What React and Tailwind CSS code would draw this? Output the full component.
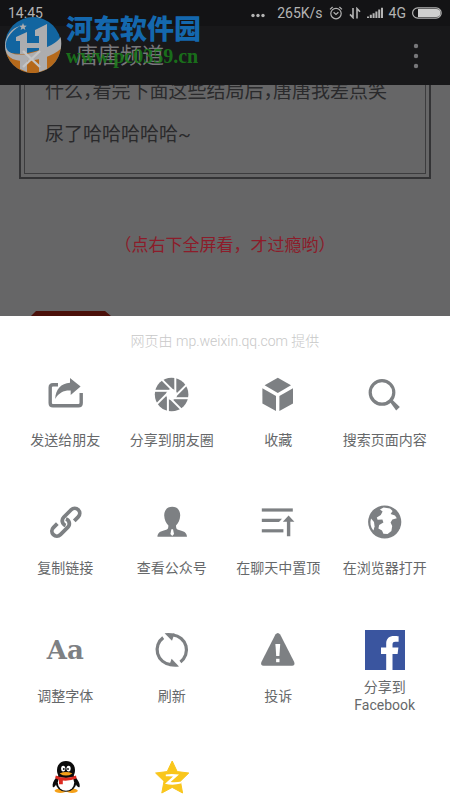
const GRAY = "#7d8083";

function Icon({ children }) {
  return (
    <svg viewBox="0 0 40 40" className="block h-10 w-10" aria-hidden="true">
      {children}
    </svg>
  );
}

const ShareIcon = () => (
  <Icon>
    <path
      d="M13 10.8H8Q5.2 10.8 5.2 13.6V29Q5.2 31.8 8 31.8H33.4Q36.2 31.8 36.2 29V19"
      fill="none"
      stroke={GRAY}
      strokeWidth="3.4"
    />
    <path d="M25 4L35.6 12.6L25.7 21V16.6C19 16.2 14 18.6 10.2 25C10.6 15.4 16 9.4 25 8.8Z" fill={GRAY} />
  </Icon>
);

const MomentsIcon = () => (
  <Icon>
    <circle cx="19.6" cy="20.5" r="16.8" fill={GRAY} />
    <circle cx="19.6" cy="20.5" r="5.4" fill="#fff" />
    {[0, 45, 90, 135, 180, 225, 270, 315].map((deg) => (
      <path
        key={deg}
        d="M17 24.2H38"
        stroke="#fff"
        strokeWidth="2"
        transform={`rotate(${deg} 19.6 20.5)`}
      />
    ))}
  </Icon>
);

const BoxIcon = () => (
  <Icon>
    <g fill={GRAY}>
      <path d="M19.8 3.8L33 11.2L19.8 19L6.6 11.2Z" />
      <path d="M4.4 14.2L18 22V37L4.4 29.4Z" />
      <path d="M21.4 22L35 14.2V29.4L21.4 37Z" />
    </g>
  </Icon>
);

const SearchIcon = () => (
  <Icon>
    <circle cx="17" cy="18.4" r="11.8" fill="none" stroke={GRAY} strokeWidth="3.2" />
    <path d="M24.6 27.4L26.8 25.2L34.8 33L31.2 36.6Z" fill={GRAY} />
  </Icon>
);

const LinkIcon = () => (
  <Icon>
    <g
      transform="translate(20.8 20.2) rotate(-45)"
      fill="none"
      stroke={GRAY}
      strokeWidth="3.8"
    >
      <path d="M7 5H12.6A5 5 0 0 0 12.6 -5H2A5 5 0 0 0 -2.4 2.2" />
      <path d="M-7 -5H-12.6A5 5 0 0 0 -12.6 5H-2A5 5 0 0 0 2.4 -2.2" />
    </g>
  </Icon>
);

const AccountIcon = () => (
  <Icon>
    <path
      d="M20.2 4.8C25.4 4.8 28.4 8.6 28.2 13.6C28 18 26.4 21.4 24 23.4C24 26.4 24.6 27.2 27 28C31.4 29.4 34.8 30 35 34.8H5.4C5.6 30 9 29.4 13.4 28C15.8 27.2 16.4 26.4 16.4 23.4C14 21.4 12.4 18 12.2 13.6C12 8.6 15 4.8 20.2 4.8Z"
      fill={GRAY}
    />
    <path d="M19.4 27.2H21L22 32L20.2 34L18.4 32Z" fill="#fff" />
  </Icon>
);

const PinTopIcon = () => (
  <Icon>
    <g fill={GRAY}>
      <path d="M3.8 6.4H34.8V9.6H3.8Z" />
      <path d="M3.8 16.8H24L21 20H3.8Z" />
      <path d="M3.8 27.2H25.4V30.4H3.8Z" />
      <path d="M30.6 13.4L36.4 19.8H32.3V34.2H28.9V19.8H24.8Z" />
    </g>
  </Icon>
);

const GlobeIcon = () => (
  <Icon>
    <circle cx="19.7" cy="20" r="16.6" fill={GRAY} />
    <path
      d="M15 7.4L18.6 5.4L25 6.6L27.6 9L25.6 12L30 13.4L31.8 16.2L27.4 17.4L25.6 20.4L27.2 24L26.4 29L22.6 32L18.4 31.8L17 28.4L13.4 26.6L14.2 23L18.4 20.4L17.4 17.6L12.6 17.8L11.8 15.6L15.8 13L17.6 9.6Z"
      fill="#fff"
    />
    <path d="M6 16.4L9 20L9.6 24.6L8.4 28.6C5.4 25 4.8 20.6 6 16.4Z" fill="#fff" />
  </Icon>
);

const FontIcon = () => (
  <span className="flex h-10 w-10 items-center justify-center font-['DejaVu_Serif',serif] text-[26px] leading-10 font-bold text-[#7d8083]">
    Aa
  </span>
);

const RefreshIcon = () => (
  <Icon>
    {[0, 180].map((deg) => (
      <g key={deg} transform={`rotate(${deg} 19.8 19.8)`}>
        <path d="M11.2 7.6A15 15 0 0 0 18.6 34.6" fill="none" stroke={GRAY} strokeWidth="3.2" />
        <path d="M19.6 28.8L27 36.4Q22 37 17 36Z" fill={GRAY} />
      </g>
    ))}
  </Icon>
);

const WarningIcon = () => (
  <Icon>
    <path
      d="M17.4 4.4Q19.8 1.4 22.2 4.4L36.2 32Q37.4 35.6 34 35.8H5.6Q2.2 35.6 3.4 32Z"
      fill={GRAY}
    />
    <path d="M17.4 14H22.2L21.4 26H18.2Z" fill="#fff" />
    <path d="M18.1 28.8H21.5V32.2H18.1Z" fill="#fff" />
  </Icon>
);

const FacebookIcon = () => (
  <Icon>
    <path d="M0 0H40V40H0Z" fill="#3a559f" />
    <path
      d="M21.2 40V24H16V17.6H21.2V13.6C21.2 8.4 24.4 6 29 6C31 6 32.4 6.1 33.6 6.3V11.8H30.4C28 11.8 27.5 13 27.5 14.6V17.6H33.4L32.6 24H27.5V40Z"
      fill="#fff"
    />
  </Icon>
);

const QQIcon = () => (
  <Icon>
    <path d="M11.6 19C8.4 22.4 7 26.4 7.8 29C8.8 30 10.4 28 11 26.6H31C31.6 28 33.6 30 34.6 29C35.4 26.4 33.4 22.4 30.4 19Z" fill="#0b0b0b" />
    <ellipse cx="15.4" cy="32.8" rx="5.8" ry="2.2" fill="#f5a11a" />
    <ellipse cx="27" cy="32.8" rx="5.8" ry="2.2" fill="#f5a11a" />
    <ellipse cx="21" cy="24" rx="10.4" ry="9.8" fill="#0b0b0b" />
    <ellipse cx="21" cy="24.6" rx="8.2" ry="8.2" fill="#fff" />
    <path d="M21 3C26.6 3 30 7 30 12C30 17 28 20 21 20C14 20 12 17 12 12C12 7 15.4 3 21 3Z" fill="#0b0b0b" />
    <ellipse cx="18.2" cy="10.6" rx="2.1" ry="2.9" fill="#fff" />
    <ellipse cx="23.6" cy="10.6" rx="2.1" ry="2.9" fill="#fff" />
    <circle cx="18.8" cy="11" r="0.9" fill="#0b0b0b" />
    <circle cx="23" cy="11" r="0.9" fill="#0b0b0b" />
    <path d="M14.6 15.4Q21 12.6 27.4 15.4Q21 19.8 14.6 15.4Z" fill="#f5a11a" />
    <path d="M10.8 17.4Q21 22 31 17.4L31.6 20.6Q25 23.2 17.8 22.6V26.2H14V21.8Q11.6 21.2 10.2 20Z" fill="#dd2a20" />
  </Icon>
);

const QzoneIcon = () => (
  <Icon>
    <path
      d="M20.2 3L25.2 13.6L36.8 15L28.4 23.2L30.6 35L20.2 29.4L9.8 35L12 23.2L3.6 15L15.2 13.6Z"
      fill="#f9c61c"
      stroke="#f9c61c"
      strokeLinejoin="round"
    />
    <path
      d="M13.8 16.4Q20 15.4 27 16.6L18.6 24Q24.4 24.6 29.4 23.4L28.8 25.6Q21 27.6 13 25.8L21 18.4Q17.4 18 13.8 18.2Z"
      fill="#fff"
    />
  </Icon>
);

const actions = [
  { label: "发送给朋友", icon: ShareIcon },
  { label: "分享到朋友圈", icon: MomentsIcon },
  { label: "收藏", icon: BoxIcon },
  { label: "搜索页面内容", icon: SearchIcon },
  { label: "复制链接", icon: LinkIcon },
  { label: "查看公众号", icon: AccountIcon },
  { label: "在聊天中置顶", icon: PinTopIcon },
  { label: "在浏览器打开", icon: GlobeIcon },
  { label: "调整字体", icon: FontIcon },
  { label: "刷新", icon: RefreshIcon },
  { label: "投诉", icon: WarningIcon },
  { label: "分享到 Facebook", icon: FacebookIcon },
];

const apps = [
  { name: "QQ", icon: QQIcon },
  { name: "QQ空间", icon: QzoneIcon },
];

function StatusBar() {
  return (
    <div className="flex h-[26px] items-center bg-[#131315] px-2 text-sm text-[#b4b4b4]">
      <span>14:45</span>
      <div className="ml-auto flex items-center gap-1.5">
        <svg viewBox="0 0 14 10" className="mr-1.5 h-[10px] w-[14px]" fill="#b4b4b4">
          <circle cx="2" cy="7.5" r="1.7" />
          <circle cx="7" cy="7.5" r="1.7" />
          <circle cx="12" cy="7.5" r="1.7" />
        </svg>
        <span>265K/s</span>
        <svg viewBox="0 0 14 14" className="h-[14px] w-[14px]" fill="none" stroke="#b4b4b4" strokeWidth="1.2">
          <circle cx="7" cy="7.6" r="5.2" />
          <path d="M4.6 6.2L7 8.4L9.4 6.2M1 3.4L3.6 1M13 3.4L10.4 1" />
        </svg>
        <svg viewBox="0 0 12 12" className="h-3 w-3" fill="none" stroke="#b4b4b4" strokeWidth="1.6">
          <path d="M4 1V10.6L1 7.4M8 11.4V1.6L11 4.8" />
        </svg>
        <svg viewBox="0 0 16 12" className="h-3 w-4" fill="#b4b4b4">
          <path d="M0 9.4H2V11H0ZM2.8 7.8H4.8V11H2.8ZM5.6 6.2H7.6V11H5.6ZM8.4 4.4H10.4V11H8.4ZM11.2 2.6H13.2V11H11.2ZM14 0.8H16V11H14Z" />
        </svg>
        <span>4G</span>
        <svg viewBox="0 0 30 12" className="h-3 w-[30px]">
          <rect x="0.6" y="0.8" width="28.6" height="10.4" rx="5.2" fill="none" stroke="#b4b4b4" strokeWidth="1.2" />
          <path d="M6 2H24.4A4 4 0 0 1 24.4 10H6Z" fill="#d0d0d0" />
        </svg>
      </div>
    </div>
  );
}

function Header() {
  return (
    <header className="flex h-[59px] items-center bg-[#18181a] px-6">
      <button type="button" aria-label="关闭" className="h-5 w-5">
        <svg viewBox="0 0 20 20" className="h-5 w-5" stroke="#8a8a8a" strokeWidth="2">
          <path d="M3 3L17 17M17 3L3 17" />
        </svg>
      </button>
      <h1 className="ml-8 text-[22px] leading-8 text-[#77777a]">唐唐频道</h1>
      <button type="button" aria-label="更多" className="ml-auto h-7 w-5">
        <svg viewBox="0 0 20 28" className="h-7 w-5" fill="#77777a">
          <circle cx="10" cy="4" r="2.2" />
          <circle cx="10" cy="14" r="2.2" />
          <circle cx="10" cy="24" r="2.2" />
        </svg>
      </button>
    </header>
  );
}

function Watermark() {
  return (
    <div className="pointer-events-none absolute top-3 left-1 flex items-start gap-1">
      <svg viewBox="0 0 58 58" className="mt-1 h-[58px] w-[58px]" aria-hidden="true">
        <circle cx="29" cy="29" r="28" fill="#1265a0" />
        <path d="M1.6 35C14 42 40 34 56.8 26A28 28 0 0 1 1.6 35Z" fill="#b5691b" />
        <path
          d="M16 10C6 16 1 24 2 31C4 40 18 40 31 36C43 32 54 26 56.6 21C57.6 26 57.4 30 56.6 33C49 40 34 45 20 45C8 45 1 40 1 30C1 20 8 12 16 10Z"
          fill="#adadaf"
        />
        <path d="M12 21L23 16V38H16V25H12ZM31 14L43 8V34L35 37V20H31Z" fill="#adadaf" />
        <path d="M16 42H23V56L16 53ZM35 38L43 34V53L35 56V38Z" fill="#adadaf" />
        <path d="M23 27H35V32H23Z" fill="#adadaf" />
        <path d="M19 7L20 9.6L22.8 9.8L20.6 11.4L21.4 14L19 12.6L16.6 14L17.4 11.4L15.2 9.8L18 9.6Z" fill="#adadaf" />
        <path d="M19 35L36 51M36 35L19 51" stroke="#c4c4c4" strokeWidth="2.4" />
      </svg>
      <div className="pt-0.5">
        <p className="text-[27px] leading-8 font-black text-[#1468ae]">河东软件园</p>
        <p className="font-['Liberation_Serif',serif] text-[20px] leading-5 font-bold text-[#1a7a1a]/90">
          www.pc0359.cn
        </p>
      </div>
    </div>
  );
}

function Article() {
  return (
    <main className="overflow-hidden">
      <div className="mx-[19px] -mt-[21px] border-2 border-[#333335] p-[3px]">
        <div className="border border-[#3c3c3e] px-5 pb-[17px]">
          <p className="text-[19px] leading-[43px] text-[#2a2a2c] [font-feature-settings:'halt']">
            什么，看完下面这些结局后，唐唐我差点笑尿了哈哈哈哈哈~
          </p>
        </div>
      </div>
      <p className="mt-[52px] text-center text-[17px] leading-7 text-[#8c1c2a]">
        （点右下全屏看，才过瘾哟）
      </p>
      <svg viewBox="0 0 80 5" className="mt-[52px] ml-[31px] block h-[5px] w-20" aria-hidden="true">
        <path d="M0 5L5 0H74L80 5Z" fill="#4b100a" />
      </svg>
    </main>
  );
}

function ShareSheet() {
  return (
    <section className="flex-1 bg-white px-3 pt-4" aria-label="分享">
      <p className="mb-6 text-center text-sm leading-[18px] font-light text-[#c8c8c8]">
        网页由 mp.weixin.qq.com 提供
      </p>
      <div className="grid grid-cols-4 gap-y-11">
        {actions.map(({ label, icon: ActionIcon }) => (
          <button key={label} type="button" className="flex flex-col items-center gap-2">
            <ActionIcon />
            <span className="flex h-9 items-center text-sm leading-[18px] text-[#66686a]">
              <span className="max-w-[88px]">{label}</span>
            </span>
          </button>
        ))}
        {apps.map(({ name, icon: AppIcon }) => (
          <button key={name} type="button" aria-label={name} className="flex flex-col items-center">
            <AppIcon />
          </button>
        ))}
      </div>
    </section>
  );
}

export default function App() {
  return (
    <div className="relative flex h-screen flex-col overflow-hidden bg-[#666667] font-[Roboto,'Noto_Sans_CJK_SC',sans-serif]">
      <StatusBar />
      <Header />
      <Article />
      <ShareSheet />
      <Watermark />
    </div>
  );
}
